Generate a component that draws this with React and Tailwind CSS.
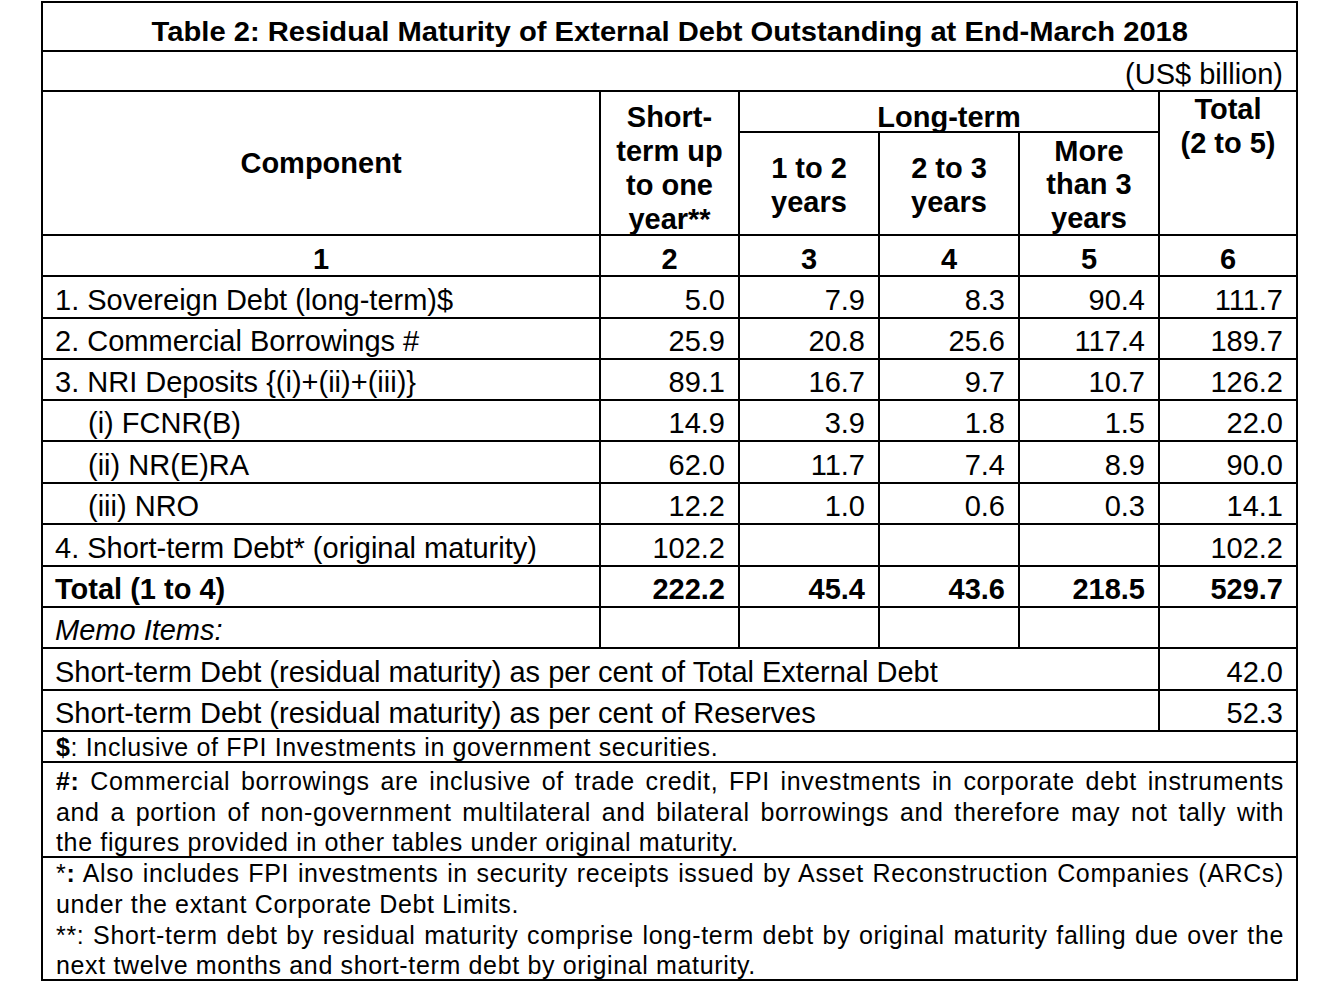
import React from "react";

const COLS = [
  "w-[558px] border-r-2 border-black",
  "w-[139px] border-r-2 border-black",
  "w-[140px] border-r-2 border-black",
  "w-[140px] border-r-2 border-black",
  "w-[140px] border-r-2 border-black",
  "flex-1",
];

const ROWS = [
  { label: "1. Sovereign Debt (long-term)$", v: ["5.0", "7.9", "8.3", "90.4", "111.7"], h: "h-[42px]" },
  { label: "2. Commercial Borrowings #", v: ["25.9", "20.8", "25.6", "117.4", "189.7"], h: "h-[41px]" },
  { label: "3. NRI Deposits {(i)+(ii)+(iii)}", v: ["89.1", "16.7", "9.7", "10.7", "126.2"], h: "h-[41px]" },
  { label: "(i) FCNR(B)", sub: true, v: ["14.9", "3.9", "1.8", "1.5", "22.0"], h: "h-[41px]" },
  { label: "(ii) NR(E)RA", sub: true, v: ["62.0", "11.7", "7.4", "8.9", "90.0"], h: "h-[42px]" },
  { label: "(iii) NRO", sub: true, v: ["12.2", "1.0", "0.6", "0.3", "14.1"], h: "h-[41px]" },
  { label: "4. Short-term Debt* (original maturity)", v: ["102.2", "", "", "", "102.2"], h: "h-[42px]" },
  { label: "Total (1 to 4)", bold: true, v: ["222.2", "45.4", "43.6", "218.5", "529.7"], h: "h-[41px]" },
  { label: "Memo Items:", italic: true, v: ["", "", "", "", ""], h: "h-[41px]" },
];

function DataRow({ row }) {
  const weight = row.bold ? "font-bold" : "";
  return (
    <div className={"flex shrink-0 border-b-2 border-black " + row.h}>
      <div
        className={
          COLS[0] +
          " flex items-end leading-[33px] " +
          (row.sub ? "pl-[45px] " : "pl-[12px] ") +
          (row.italic ? "italic " : "") +
          weight
        }
      >
        {row.label}
      </div>
      {row.v.map((val, i) => (
        <div
          key={i}
          className={COLS[i + 1] + " flex items-end justify-end pr-[13px] leading-[33px] " + weight}
        >
          {val}
        </div>
      ))}
    </div>
  );
}

function MemoRow({ label, value, h }) {
  return (
    <div className={"flex shrink-0 border-b-2 border-black " + h}>
      <div className="w-[1117px] border-r-2 border-black flex items-end pl-[12px] leading-[33px]">
        {label}
      </div>
      <div className="flex-1 flex items-end justify-end pr-[13px] leading-[33px]">{value}</div>
    </div>
  );
}

function JLine({ children }) {
  return <div className="text-justify [text-align-last:justify]">{children}</div>;
}

export default function App() {
  return (
    <div className="min-h-[1006px] bg-white pt-[1px] text-black font-['Liberation_Sans',Arial,sans-serif] text-[29px]">
      <div className="ml-[41px] w-[1257px] h-[980px] border-2 border-black flex flex-col">
        {/* Title */}
        <div className="h-[49px] shrink-0 border-b-2 border-black flex items-center justify-center pt-[10px]">
          <span className="inline-block font-bold text-[27px] leading-[30px] scale-x-[1.08]">
            Table 2: Residual Maturity of External Debt Outstanding at End-March 2018
          </span>
        </div>
        {/* Units */}
        <div className="h-[40px] shrink-0 border-b-2 border-black flex items-end justify-end pr-[13px] leading-[31px]">
          (US$ billion)
        </div>
        {/* Header */}
        <div className="h-[144px] shrink-0 border-b-2 border-black flex font-bold">
          <div className={COLS[0] + " flex items-center justify-center leading-[33px]"}>Component</div>
          <div className={COLS[1] + " flex items-start justify-center text-center leading-[34px] pt-[8px]"}>
            <div>
              Short-
              <br />
              term up
              <br />
              to one
              <br />
              year**
            </div>
          </div>
          <div className="w-[420px] border-r-2 border-black flex flex-col">
            <div className="h-[41px] shrink-0 border-b-2 border-black flex items-end justify-center leading-[28px]">
              Long-term
            </div>
            <div className="flex-1 min-h-0 flex">
              <div className="w-[140px] border-r-2 border-black flex items-center justify-center text-center leading-[33.6px] pt-[5px]">
                <div>
                  1 to 2
                  <br />
                  years
                </div>
              </div>
              <div className="w-[140px] border-r-2 border-black flex items-center justify-center text-center leading-[33.6px] pt-[5px]">
                <div>
                  2 to 3
                  <br />
                  years
                </div>
              </div>
              <div className="flex-1 flex items-center justify-center text-center leading-[33.6px] pt-[3px]">
                <div>
                  More
                  <br />
                  than 3
                  <br />
                  years
                </div>
              </div>
            </div>
          </div>
          <div className="flex-1 flex items-start justify-center text-center leading-[34px]">
            <div>
              Total
              <br />
              (2 to 5)
            </div>
          </div>
        </div>
        {/* Column numbers */}
        <div className="h-[41px] shrink-0 border-b-2 border-black flex font-bold">
          {["1", "2", "3", "4", "5", "6"].map((n, i) => (
            <div key={n} className={COLS[i] + " flex items-end justify-center leading-[31px]"}>
              {n}
            </div>
          ))}
        </div>
        {/* Data rows */}
        {ROWS.map((r) => (
          <DataRow key={r.label} row={r} />
        ))}
        <MemoRow
          label="Short-term Debt (residual maturity) as per cent of Total External Debt"
          value="42.0"
          h="h-[42px]"
        />
        <MemoRow label="Short-term Debt (residual maturity) as per cent of Reserves" value="52.3" h="h-[41px]" />
        {/* Footnotes */}
        <div className="text-[25px] tracking-[0.65px] leading-[30.5px]">
          <div className="h-[31px] border-b-2 border-black pl-[13px] pr-[12px]">
            <span className="font-bold">$</span>: Inclusive of FPI Investments in government securities.
          </div>
          <div className="h-[95px] border-b-2 border-black pl-[13px] pr-[12px] pt-[3px]">
            <JLine>
              <span className="font-bold">#:</span> Commercial borrowings are inclusive of trade credit, FPI
              investments in corporate debt instruments
            </JLine>
            <JLine>
              and a portion of non-government multilateral and bilateral borrowings and therefore may not tally
              with
            </JLine>
            <div>the figures provided in other tables under original maturity.</div>
          </div>
          <div className="h-[121px] pl-[13px] pr-[12px] leading-[30.8px]">
            <JLine>
              *<span className="font-bold">:</span> Also includes FPI investments in security receipts issued by
              Asset Reconstruction Companies (ARCs)
            </JLine>
            <div>under the extant Corporate Debt Limits.</div>
            <JLine>
              **: Short-term debt by residual maturity comprise long-term debt by original maturity falling due
              over the
            </JLine>
            <div>next twelve months and short-term debt by original maturity.</div>
          </div>
        </div>
      </div>
    </div>
  );
}
